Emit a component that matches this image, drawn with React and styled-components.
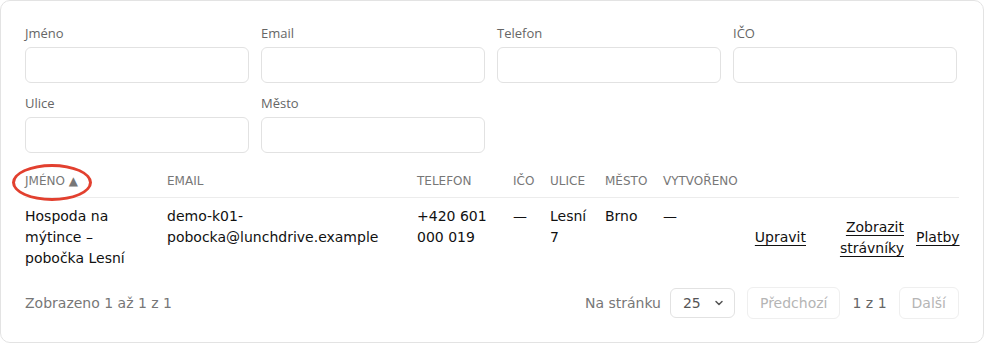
import React from "react";
import styled, { createGlobalStyle } from "styled-components";
import { ChevronDown } from "lucide-react";

const Global = createGlobalStyle`
  html, body { margin: 0; padding: 0; background: #fff; }
  body { font-family: "DejaVu Sans", sans-serif; color: #111; }
  * { box-sizing: border-box; }
`;

const Card = styled.div`
  width: 984px;
  height: 343px;
  border: 1px solid #e3e3e3;
  border-radius: 10px;
  padding: 24px;
  background: #fff;
`;

const FilterGrid = styled.div`
  display: grid;
  grid-template-columns: repeat(4, 224px);
  column-gap: 12px;
  row-gap: 12px;
`;

const Field = styled.label`
  display: flex;
  flex-direction: column;
  gap: 6px;
`;

const FieldLabel = styled.span`
  font-family: "Open Sans", sans-serif;
  font-size: 13px;
  line-height: 16px;
  color: #666;
`;

const Input = styled.input`
  height: 36px;
  width: 100%;
  border: 1px solid #e2e2e2;
  border-radius: 6px;
  background: #fff;
  outline: none;
`;

const Table = styled.table`
  width: 934px;
  margin-top: 12px;
  border-collapse: collapse;
  table-layout: fixed;
`;

const Th = styled.th`
  position: relative;
  text-align: left;
  font-weight: 400;
  font-size: 12px;
  line-height: 16px;
  color: #777;
  text-transform: uppercase;
  padding: 8px 12px 8px 0;
  border-bottom: 1px solid #ececec;
  white-space: nowrap;
`;

const Td = styled.td`
  vertical-align: ${(p) => (p.$action ? "middle" : "top")};
  text-align: ${(p) => (p.$action ? "right" : "left")};
  font-size: 14px;
  line-height: 21px;
  color: #111;
  padding: 8px ${(p) => (p.$last ? "0" : "12px")} 8px 0;
`;

const ActionLink = styled.a`
  color: #111;
  text-decoration: underline;
  text-underline-offset: 3px;
  text-decoration-thickness: 1px;
  cursor: pointer;
`;

const Marker = styled.span`
  position: absolute;
  left: -13px;
  top: -1px;
  width: 80px;
  height: 37px;
  border: 3px solid #e2402f;
  border-radius: 50%;
  pointer-events: none;
`;

const Footer = styled.div`
  margin-top: 10px;
  display: flex;
  align-items: center;
  justify-content: space-between;
`;

const Muted = styled.span`
  font-size: 14px;
  color: #777;
`;

const Pager = styled.div`
  display: flex;
  align-items: center;
  gap: 12px;
`;

const PerPage = styled.div`
  display: flex;
  align-items: center;
  gap: 9px;
`;

const SelectWrap = styled.div`
  position: relative;
  width: 65px;
  height: 30px;
`;

const Select = styled.select`
  appearance: none;
  width: 100%;
  height: 100%;
  border: 1px solid #e2e2e2;
  border-radius: 6px;
  background: #fff;
  font-family: "DejaVu Sans", sans-serif;
  font-size: 14px;
  color: #555;
  padding: 0 0 0 12px;
`;

const Chevron = styled(ChevronDown)`
  position: absolute;
  right: 10px;
  top: 9px;
  pointer-events: none;
  color: #555;
`;

const PageButton = styled.button`
  height: 32px;
  padding: 0 ${(p) => p.$px}px;
  border: 1px solid #efefef;
  border-radius: 6px;
  background: #fff;
  font-family: "DejaVu Sans", sans-serif;
  font-size: 14px;
  color: #b5b5b5;
`;

const PageInfo = styled.span`
  font-size: 14px;
  color: #666;
`;

const cols = [142, 250, 96, 37, 55, 58, 79, 76, 98, 43];

export default function App() {
  return (
    <>
      <Global />
      <Card>
        <FilterGrid>
          {["Jméno", "Email", "Telefon", "IČO", "Ulice", "Město"].map((l) => (
            <Field key={l}>
              <FieldLabel>{l}</FieldLabel>
              <Input />
            </Field>
          ))}
        </FilterGrid>
        <Table>
          <colgroup>
            {cols.map((w, i) => (
              <col key={i} style={{ width: w }} />
            ))}
          </colgroup>
          <thead>
            <tr>
              <Th>
                Jméno ▲<Marker />
              </Th>
              <Th>Email</Th>
              <Th>Telefon</Th>
              <Th>IČO</Th>
              <Th>Ulice</Th>
              <Th>Město</Th>
              <Th>Vytvořeno</Th>
              <Th />
              <Th />
              <Th />
            </tr>
          </thead>
          <tbody>
            <tr>
              <Td>Hospoda na mýtince – pobočka Lesní</Td>
              <Td>demo-k01-pobocka@lunchdrive.example</Td>
              <Td>+420 601 000 019</Td>
              <Td>—</Td>
              <Td>Lesní 7</Td>
              <Td>Brno</Td>
              <Td>—</Td>
              <Td $action>
                <ActionLink>Upravit</ActionLink>
              </Td>
              <Td $action>
                <ActionLink>Zobrazit strávníky</ActionLink>
              </Td>
              <Td $action $last>
                <ActionLink>Platby</ActionLink>
              </Td>
            </tr>
          </tbody>
        </Table>
        <Footer>
          <Muted>Zobrazeno 1 až 1 z 1</Muted>
          <Pager>
            <PerPage>
              <Muted>Na stránku</Muted>
              <SelectWrap>
                <Select defaultValue="25">
                  <option value="10">10</option>
                  <option value="25">25</option>
                  <option value="50">50</option>
                </Select>
                <Chevron size={12} strokeWidth={3} />
              </SelectWrap>
            </PerPage>
            <PageButton $px={12} disabled>
              Předchozí
            </PageButton>
            <PageInfo>1 z 1</PageInfo>
            <PageButton $px={12} disabled>
              Další
            </PageButton>
          </Pager>
        </Footer>
      </Card>
    </>
  );
}
